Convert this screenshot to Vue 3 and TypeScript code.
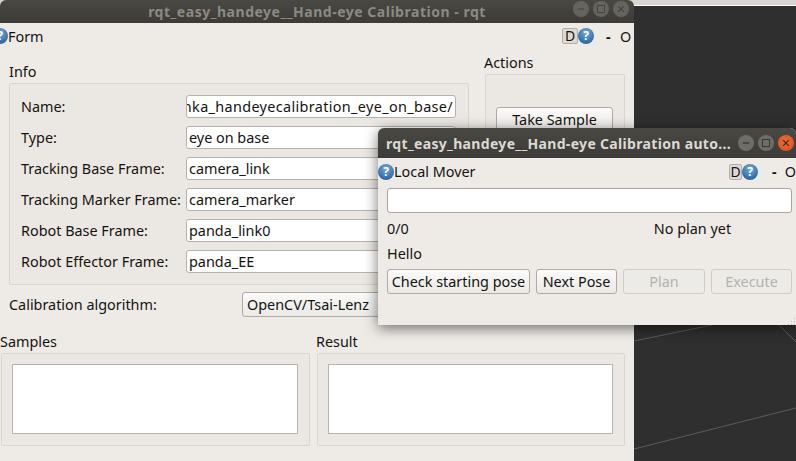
<script setup lang="ts">
interface FrameRow {
  label: string
  value: string
  tail?: boolean
}

const rows: FrameRow[] = [
  { label: 'Name:', value: 'franka_handeyecalibration_eye_on_base/', tail: true },
  { label: 'Type:', value: 'eye on base' },
  { label: 'Tracking Base Frame:', value: 'camera_link' },
  { label: 'Tracking Marker Frame:', value: 'camera_marker' },
  { label: 'Robot Base Frame:', value: 'panda_link0' },
  { label: 'Robot Effector Frame:', value: 'panda_EE' }
]
</script>

<template>
  <div class="desktop">
    <div class="desk-strip"></div>
    <svg class="grid-lines" width="162" height="461" viewBox="634 0 162 461">
      <path d="M634 341 L712 325 M778 324 L796 342 M634 449 L796 408" stroke="#5c5c5c" stroke-width="1" fill="none" />
    </svg>

    <!-- Main window -->
    <section class="window main-window">
      <header class="titlebar inactive">
        <span class="title">rqt_easy_handeye__Hand-eye Calibration - rqt</span>
        <div class="controls">
          <span class="ctl"><svg width="20" height="20" viewBox="0 0 20 20"><path d="M6 10h8" stroke="#45433f" stroke-width="1.5" /></svg></span>
          <span class="ctl"><svg width="20" height="20" viewBox="0 0 20 20"><rect x="5.5" y="5.5" width="9" height="9" fill="none" stroke="#45433f" stroke-width="1.2" /></svg></span>
          <span class="ctl"><svg width="20" height="20" viewBox="0 0 20 20"><path d="M6.5 6.5l7 7M13.5 6.5l-7 7" stroke="#45433f" stroke-width="1.5" /></svg></span>
        </div>
      </header>

      <div class="dock-head form-head">
        <span class="help edge">?</span>
        <span class="dock-name">Form</span>
        <span class="dock-tools">
          <span class="d-btn">D</span><span class="help">?</span><span class="dash">-</span><span class="oh">O</span>
        </span>
      </div>

      <div class="top-area">
        <div class="info-col">
          <div class="group-label">Info</div>
          <div class="group info-group">
            <div v-for="row in rows" :key="row.label" class="frame-row">
              <span class="frame-label">{{ row.label }}</span>
              <div class="line-edit" :class="{ tail: row.tail }"><span>{{ row.value }}</span></div>
            </div>
          </div>
        </div>
        <div class="actions-col">
          <div class="group-label">Actions</div>
          <div class="group actions-group">
            <button class="btn take">Take Sample</button>
          </div>
        </div>
      </div>

      <div class="algo-row">
        <span class="algo-label">Calibration algorithm:</span>
        <div class="combo">OpenCV/Tsai-Lenz</div>
      </div>

      <div class="bottom-area">
        <div class="samples-col">
          <div class="group-label">Samples</div>
          <div class="group list-group"><div class="list-box"></div></div>
        </div>
        <div class="result-col">
          <div class="group-label">Result</div>
          <div class="group list-group"><div class="list-box"></div></div>
        </div>
      </div>
    </section>

    <!-- Automatic movements window -->
    <section class="window mover-window">
      <header class="titlebar active">
        <span class="title">rqt_easy_handeye__Hand-eye Calibration auto...</span>
        <div class="controls">
          <span class="ctl"><svg width="20" height="20" viewBox="0 0 20 20"><path d="M6 10h8" stroke="#33322e" stroke-width="1.5" /></svg></span>
          <span class="ctl"><svg width="20" height="20" viewBox="0 0 20 20"><rect x="5.5" y="5.5" width="9" height="9" fill="none" stroke="#33322e" stroke-width="1.2" /></svg></span>
          <span class="ctl close"><svg width="20" height="20" viewBox="0 0 20 20"><path d="M6.5 6.5l7 7M13.5 6.5l-7 7" stroke="#3a2a20" stroke-width="1.5" /></svg></span>
        </div>
      </header>

      <div class="dock-head mover-head">
        <span class="help">?</span>
        <span class="dock-name">Local Mover</span>
        <span class="dock-tools">
          <span class="d-btn">D</span><span class="help">?</span><span class="dash">-</span><span class="oh">O</span>
        </span>
      </div>

      <div class="mover-body">
        <div class="progress"></div>
        <div class="status-row">
          <span class="count">0/0</span>
          <span class="plan-state">No plan yet</span>
        </div>
        <div class="hello">Hello</div>
        <div class="btn-row">
          <button class="btn check">Check starting pose</button>
          <button class="btn next">Next Pose</button>
          <button class="btn off plan">Plan</button>
          <button class="btn off exec">Execute</button>
        </div>
      </div>
      <svg class="grip" width="8" height="8" viewBox="0 0 8 8">
        <path d="M6 1h1v1H6zM3 4h1v1H3zM6 4h1v1H6zM0 7h1v1H0zM3 7h1v1H3zM6 7h1v1H6z" fill="#bdbab4" />
      </svg>
    </section>
  </div>
</template>

<style scoped>
.desktop {
  position: relative;
  width: 796px;
  height: 461px;
  overflow: hidden;
  background: #2f2f2f;
  font-family: "Noto Sans", "Open Sans", sans-serif;
  font-size: 14.4px;
  color: #14130f;
}

.desk-strip {
  height: 5px;
  background: #d9d6d1;
  border-bottom: 1px solid #fff;
}

.grid-lines {
  position: absolute;
  left: 634px;
  top: 0;
}

.window {
  position: absolute;
  display: flex;
  flex-direction: column;
  overflow: hidden;
  background: #eeebe7;
  border-radius: 6px 6px 0 0;
}

.main-window {
  left: 0;
  top: 0;
  width: 634px;
  height: 461px;
}

.mover-window {
  left: 378px;
  top: 128px;
  width: 418px;
  height: 197px;
  overflow: visible;
  box-shadow: 0 3px 14px rgba(0, 0, 0, 0.55);
}

.grip {
  position: absolute;
  right: 0;
  bottom: 0;
}

.titlebar {
  flex: none;
  display: flex;
  align-items: center;
  background: linear-gradient(#4a4843, #3d3b37);
  font-weight: 700;
  white-space: nowrap;
}

.titlebar.inactive {
  height: 23px;
  justify-content: center;
  color: #8c8a84;
  position: relative;
}

.titlebar.active {
  height: 30px;
  padding-left: 8px;
  color: #dcd9d3;
  border-radius: 6px 6px 0 0;
}

.title {
  font-size: 14px;
}

.inactive .title {
  letter-spacing: 0.52px;
}

.active .title {
  letter-spacing: 0.33px;
}

.controls {
  display: flex;
  gap: 0;
  align-items: center;
}

.inactive .controls {
  position: absolute;
  right: 3px;
  top: 0;
  height: 18px;
}

.active .controls {
  margin-left: auto;
}

.ctl {
  width: 16px;
  height: 16px;
  margin: 0 2px;
  border-radius: 50%;
  background: #66645f;
  display: flex;
  align-items: center;
  justify-content: center;
}

.ctl svg {
  width: 16px;
  height: 16px;
}

.active .ctl {
  background: #6f6d67;
}

.active .ctl.close {
  background: radial-gradient(circle at 50% 40%, #f0693a, #d9501f);
}

.dock-head {
  flex: none;
  display: flex;
  align-items: center;
  height: 26px;
}

.form-head {
  margin-left: -8px;
}

.mover-head {
  height: 27px;
}

.dock-tools {
  margin-left: auto;
  display: flex;
  align-items: center;
}

.form-head .dock-tools {
  width: 72px;
}

.mover-head .dock-tools {
  width: 67px;
}

.help {
  flex: none;
  width: 16px;
  height: 16px;
  border-radius: 50%;
  background: radial-gradient(circle at 50% 30%, #7aa9d4, #2f6ea8 70%, #245a8c);
  color: #fff;
  font-size: 12px;
  font-weight: 700;
  line-height: 16px;
  text-align: center;
}

.d-btn {
  width: 16px;
  height: 16px;
  box-sizing: border-box;
  border: 1px solid #b3afa8;
  border-radius: 2px;
  background: #dcd9d4;
  font-size: 14px;
  line-height: 14px;
  text-align: center;
}

.dash {
  margin-left: 12px;
  width: 6px;
  font-weight: 700;
}

.mover-head .dash {
  margin-left: 14px;
}

.oh {
  margin-left: 8px;
}

.top-area {
  flex: none;
  display: flex;
  height: 236px;
  padding-left: 9px;
}

.info-col {
  width: 460px;
}

.group-label {
  line-height: 18px;
}

.info-col > .group-label {
  margin-top: 14px;
}

.group {
  box-sizing: border-box;
  background: #ebe8e4;
  border: 1px solid #d8d5d0;
  border-radius: 2px;
}

.info-group {
  width: 460px;
  height: 202px;
  margin-top: 2px;
  padding: 11px 11px 0 11px;
  display: flex;
  flex-direction: column;
  gap: 8px;
}

.frame-row {
  display: flex;
  align-items: center;
  height: 23px;
}

.frame-label {
  width: 165px;
  white-space: nowrap;
}

.line-edit {
  width: 270px;
  height: 23px;
  box-sizing: border-box;
  display: flex;
  align-items: center;
  overflow: hidden;
  padding: 0 2px;
  background: #fff;
  border: 1px solid #b5b1ab;
  border-radius: 3px;
  white-space: nowrap;
}

.line-edit.tail {
  justify-content: flex-end;
  letter-spacing: 0.35px;
}

.actions-col {
  width: 140px;
  margin-left: 16px;
}

.actions-col > .group-label {
  margin: 5px 0 0 -1px;
}

.actions-group {
  width: 140px;
  height: 200px;
  margin-top: 2px;
  padding: 32px 10px 0 10px;
}

.btn {
  box-sizing: border-box;
  height: 25px;
  padding: 0;
  font: inherit;
  color: #14130f;
  background: linear-gradient(#fbfaf9, #ebe9e6);
  border: 1px solid #aeaaa4;
  border-radius: 3px;
  white-space: nowrap;
}

.btn.take {
  width: 117px;
}

.algo-row {
  flex: none;
  display: flex;
  align-items: center;
  height: 25px;
  margin-top: 7px;
  padding-left: 9px;
}

.algo-label {
  width: 233px;
}

.combo {
  width: 230px;
  height: 25px;
  box-sizing: border-box;
  padding-left: 4px;
  line-height: 23px;
  background: linear-gradient(#fbfaf9, #ebe9e6);
  border: 1px solid #aeaaa4;
  border-radius: 3px;
}

.bottom-area {
  flex: none;
  display: flex;
  gap: 7px;
  margin-top: 16px;
  padding-left: 1px;
}

.samples-col {
  width: 309px;
}

.result-col {
  width: 308px;
}

.samples-col .group-label,
.result-col .group-label {
  height: 18px;
  margin-left: -1px;
}

.list-group {
  height: 93px;
  margin-top: 2px;
  padding: 10px 11px 10px 10px;
}

.list-box {
  height: 70px;
  box-sizing: border-box;
  background: #fff;
  border: 1px solid #b7b4af;
}

.mover-body {
  padding: 3px 4px 0 9px;
}

.progress {
  height: 25px;
  box-sizing: border-box;
  background: #fff;
  border: 1px solid #a9a59f;
  border-radius: 3px;
}

.status-row {
  display: flex;
  height: 18px;
  margin-top: 7px;
  line-height: 18px;
}

.plan-state {
  margin-left: 245px;
}

.hello {
  height: 18px;
  margin-top: 7px;
  line-height: 18px;
}

.btn-row {
  display: flex;
  gap: 6px;
  margin-top: 6px;
}

.btn.check {
  width: 143px;
}

.btn.next {
  width: 81px;
}

.btn.off {
  color: #b6b3ad;
  background: #ecebe8;
  border-color: #cfccc7;
}

.btn.plan {
  width: 82px;
}

.btn.exec {
  width: 81px;
}
</style>
